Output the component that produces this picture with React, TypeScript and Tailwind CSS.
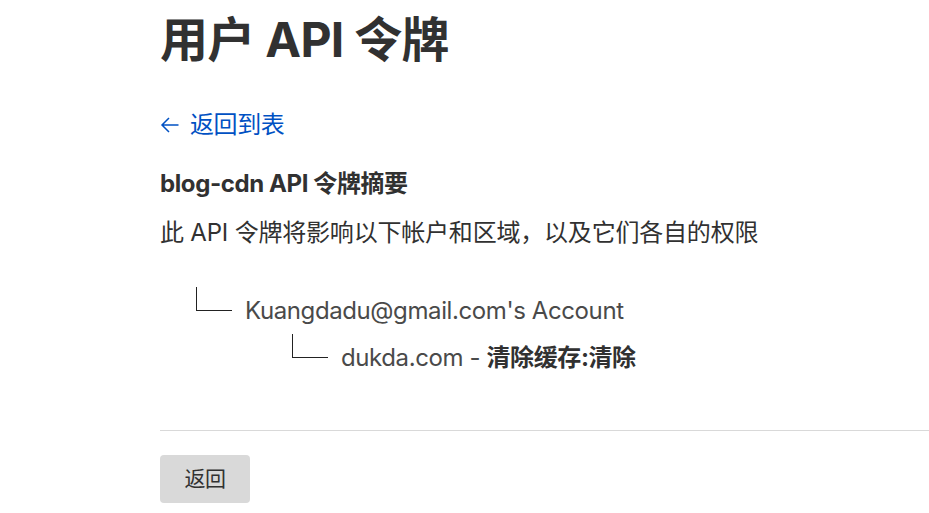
import React from "react";

const font = { fontFamily: 'Inter, "Noto Sans CJK SC", sans-serif' };

type Node = { level: number; label: React.ReactNode };

const tree: Node[] = [
  { level: 1, label: "Kuangdadu@gmail.com's Account" },
  {
    level: 2,
    label: (
      <>
        dukda.com - <span className="font-bold text-[#313131]">清除缓存:清除</span>
      </>
    ),
  },
];

function TreeRow({ node }: { node: Node }) {
  return (
    <div
      className={`flex items-start h-[47px] ${node.level === 1 ? "pl-[36px]" : "pl-[132px]"}`}
    >
      <div className="w-[36px] h-[24px] border-l border-b border-[#222] shrink-0" />
      <span className="ml-[13px] text-[24px] leading-[47px] text-[#4a4a4a]">{node.label}</span>
    </div>
  );
}

export default function App() {
  return (
    <div
      className="min-h-[513px] bg-white pl-[160px] text-[#313131] overflow-hidden tracking-[-0.4px]"
      style={font}
    >
      <h1 className="pt-[10px] text-[48px] font-bold leading-[60px] tracking-[-0.7px]">用户 API 令牌</h1>

      <a href="#" className="mt-[37px] flex items-center gap-[10px] text-[24px] leading-[36px] text-[#0051c3]">
        <svg width="20" height="20" viewBox="0 0 20 20" fill="none" stroke="currentColor" strokeWidth="1.5">
          <path d="M18.5 10H2M9 3L2 10L9 17" />
        </svg>
        返回到表
      </a>

      <h2 className="mt-[23px] text-[24px] font-bold leading-[36px]">blog-cdn API 令牌摘要</h2>
      <p className="mt-[13px] text-[24px] leading-[36px] tracking-[-0.2px]">
        此 API 令牌将影响以下帐户和区域，以及它们各自的权限
      </p>

      <div className="mt-[36px]">
        {tree.map((n, i) => (
          <TreeRow key={i} node={n} />
        ))}
      </div>

      <div className="mt-[49px] border-t border-[#d9d9d9]" />

      <button className="mt-[24px] w-[90px] h-[48px] rounded-[4px] bg-[#d9d9d9] text-[21px] text-[#313131]">
        返回
      </button>
    </div>
  );
}
